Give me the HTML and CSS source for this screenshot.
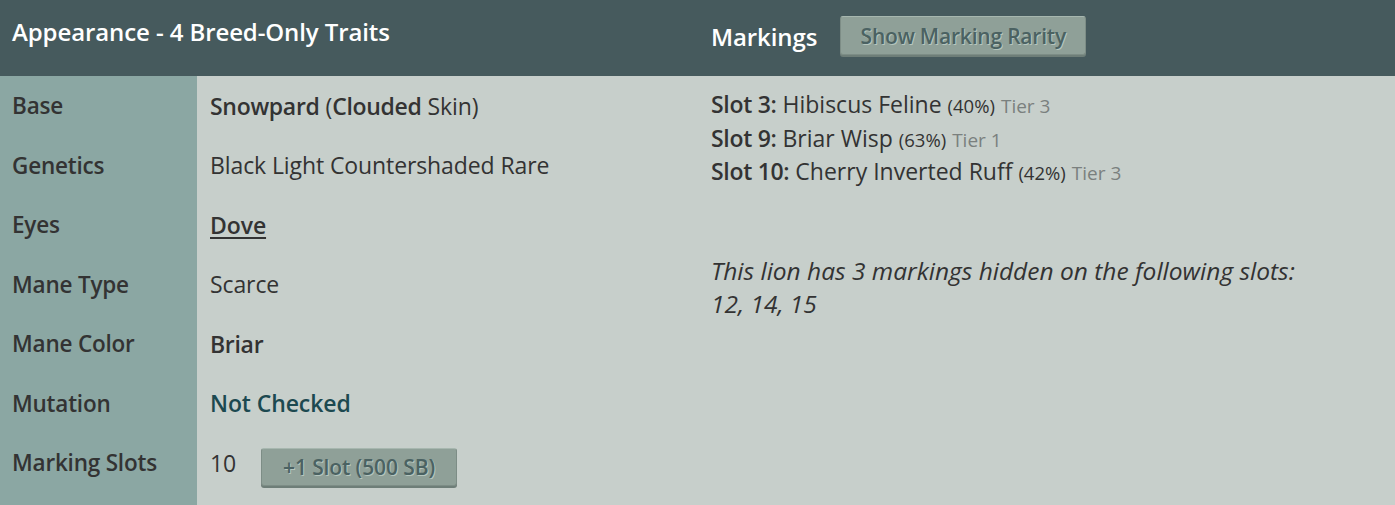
FILE: index.html
```html
<!DOCTYPE html>
<html>
<head>
<meta charset="utf-8">
<link rel="stylesheet" href="styles.css">
</head>
<body>
<div class="page">
  <section class="appearance">
    <header class="bar bar-left"><h2 class="title">Appearance - 4 Breed-Only Traits</h2></header>
    <div class="table">
      <div class="row"><div class="label">Base</div><div class="value"><b>Snowpard</b> (<b>Clouded</b> Skin)</div></div>
      <div class="row"><div class="label">Genetics</div><div class="value">Black Light Countershaded Rare</div></div>
      <div class="row"><div class="label">Eyes</div><div class="value"><a class="link">Dove</a></div></div>
      <div class="row"><div class="label">Mane Type</div><div class="value">Scarce</div></div>
      <div class="row"><div class="label">Mane Color</div><div class="value"><b>Briar</b></div></div>
      <div class="row"><div class="label">Mutation</div><div class="value"><span class="teal">Not Checked</span></div></div>
      <div class="row"><div class="label">Marking Slots</div><div class="value">10 <button class="btn btn-slot">+1 Slot (500 SB)</button></div></div>
      <div class="row filler"><div class="label"></div><div class="value"></div></div>
    </div>
  </section>
  <section class="markings">
    <header class="bar bar-right"><h2 class="title">Markings</h2><button class="btn btn-rarity">Show Marking Rarity</button></header>
    <div class="mark-body">
      <div class="mark"><b>Slot 3:</b> Hibiscus Feline <span class="pct">(40%)</span> <span class="tier">Tier 3</span></div>
      <div class="mark"><b>Slot 9:</b> Briar Wisp <span class="pct">(63%)</span> <span class="tier">Tier 1</span></div>
      <div class="mark"><b>Slot 10:</b> Cherry Inverted Ruff <span class="pct">(42%)</span> <span class="tier">Tier 3</span></div>
      <p class="hidden-note">This lion has 3 markings hidden on the following slots:<br>12, 14, 15</p>
    </div>
  </section>
</div>
</body>
</html>
```

FILE: styles.css
```css
* { box-sizing: border-box; }
html, body {
  margin: 0;
  padding: 0;
  height: 100%;
  background: #c7cfcb;
  font-family: "Open Sans", "Noto Sans", sans-serif;
  color: #333;
}
.page {
  display: flex;
  height: 505px;
  overflow: hidden;
}
.appearance {
  width: 700px;
  display: flex;
  flex-direction: column;
}
.markings {
  flex: 1;
  display: flex;
  flex-direction: column;
}
.bar {
  height: 76px;
  background: #465a5d;
  display: flex;
  align-items: center;
  flex-shrink: 0;
}
.bar-left { padding: 0 0 14px 12px; }
.bar-right { padding: 0 0 3px 11px; }
.title {
  margin: 0;
  color: #fff;
  font-size: 24px;
  font-weight: 600;
  letter-spacing: -0.1px;
}
.table {
  flex: 1;
  display: flex;
  flex-direction: column;
}
.row {
  display: flex;
  height: 59.5px;
}
.row.filler { flex: 1; }
.label {
  width: 197px;
  background: #8ba7a3;
  padding-left: 12px;
  display: flex;
  align-items: center;
  font-size: 22.5px;
  font-weight: 600;
  letter-spacing: -0.2px;
  color: #333;
}
.value {
  flex: 1;
  padding-left: 13px;
  display: flex;
  align-items: center;
  font-size: 23px;
  letter-spacing: -0.1px;
  color: #333;
  white-space: pre;
}
.value b { font-weight: 600; letter-spacing: -0.3px; }
.link {
  font-weight: 600;
  text-decoration: underline;
  text-underline-offset: 3px;
  color: #333;
}
.teal { color: #1c4950; font-weight: 600; }
.btn {
  font-family: "Open Sans", "Noto Sans", sans-serif;
  background: #8fa098;
  border: 1px solid #7d8d86;
  border-top-color: #a7b7af;
  border-radius: 3px;
  box-shadow: 0 2px 0 #6e7e78;
  color: #4b6262;
  text-shadow: 1px 1px 0 #b6c6be;
  font-weight: 600;
  padding: 0;
  cursor: pointer;
}
.btn-slot {
  margin-left: 19px;
  width: 196px;
  height: 38px;
  font-size: 21px;
  letter-spacing: -0.1px;
  margin-top: 9px;
}
.btn-rarity {
  margin-left: 23px;
  width: 246px;
  height: 39px;
  font-size: 21px;
  letter-spacing: -0.2px;
  margin-bottom: 2px;
}
.mark-body {
  padding: 12px 0 0 11px;
}
.mark {
  height: 33.5px;
  font-size: 23px;
  line-height: 33.5px;
  color: #333;
  white-space: nowrap;
}
.mark b { font-weight: 600; letter-spacing: -0.3px; }
.pct { font-size: 18.5px; line-height: 1; color: #333; }
.tier { font-size: 19px; line-height: 1; color: #7a807e; }
.hidden-note {
  margin: 65px 0 0 0;
  font-size: 24.5px;
  font-style: italic;
  line-height: 33px;
  color: #333;
}
```
